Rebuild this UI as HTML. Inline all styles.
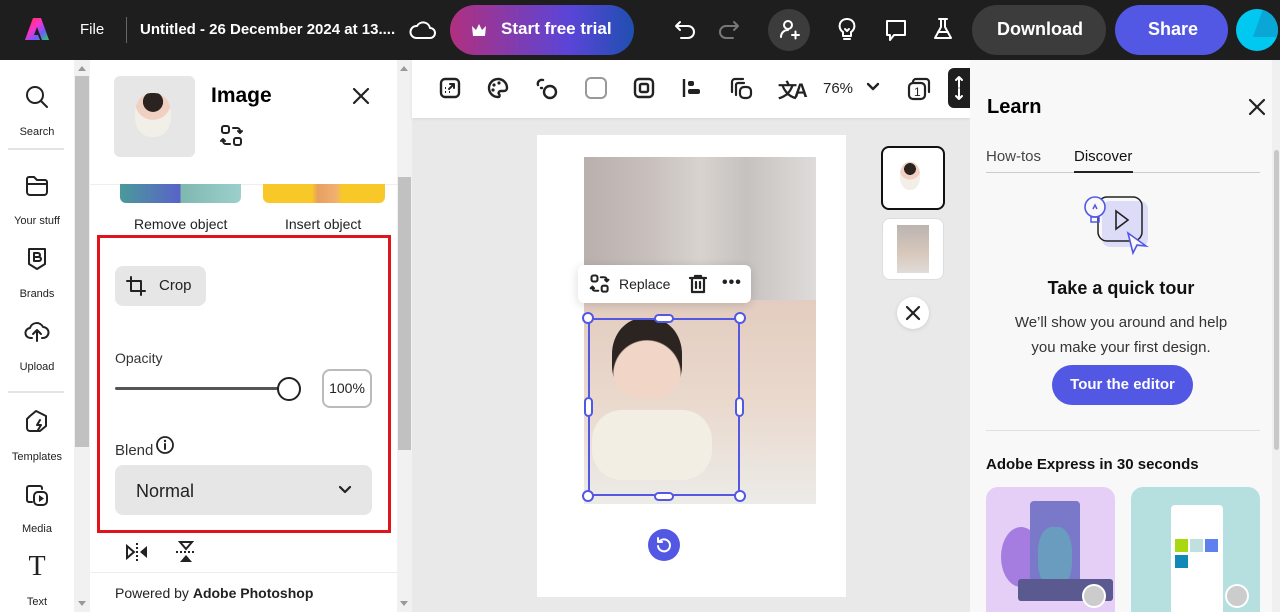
<!DOCTYPE html>
<html><head><meta charset="utf-8"><style>
*{box-sizing:border-box;margin:0;padding:0}
body{width:1280px;height:612px;overflow:hidden;font-family:"Liberation Sans",sans-serif;background:#e9e9e9;position:relative;color:#222}
.a{position:absolute}
.top{left:0;top:0;width:1280px;height:60px;background:#1e1e1e;color:#fff}
.ic{stroke:#222;fill:none;stroke-width:2;stroke-linecap:round;stroke-linejoin:round}
.w{stroke:#fff}
.rl{font-size:11px;color:#222;text-align:center;width:74px;left:0}
</style></head><body>
<div class="a top">
 <svg class="a" style="left:24px;top:16px" width="26" height="26" viewBox="0 0 26 26"><defs><linearGradient id="g" x1="0" y1="0" x2="1" y2="1"><stop offset="0" stop-color="#ff3b30"/><stop offset=".4" stop-color="#ff2fc8"/><stop offset=".7" stop-color="#6a5cff"/><stop offset="1" stop-color="#2fd15a"/></linearGradient></defs><path d="M9 2h8l8 22h-7l-5-13-3 8h4l2 5H1z" fill="url(#g)"/></svg>
 <div class="a" style="left:80px;top:21px;font-size:15px">File</div>
 <div class="a" style="left:126px;top:17px;width:1px;height:26px;background:#666"></div>
 <div class="a" style="left:140px;top:21px;font-size:15px;font-weight:bold">Untitled - 26 December 2024 at 13....</div>
 <svg class="a" style="left:409px;top:18px" width="28" height="24" viewBox="0 0 28 24"><path class="ic w" d="M7 20h14a5 5 0 0 0 0-10 7 7 0 0 0-13-2A6 6 0 0 0 7 20z"/></svg>
 <div class="a" style="left:450px;top:5px;width:184px;height:50px;border-radius:25px;background:linear-gradient(90deg,#b0307f,#5a45d8 65%,#1f4fb0)"></div>
 <svg class="a" style="left:470px;top:22px" width="18" height="16" viewBox="0 0 18 16"><path d="M2 4l4 4 3-6 3 6 4-4-1 10H3z" fill="#fff"/></svg>
 <div class="a" style="left:501px;top:19px;font-size:17px;font-weight:bold">Start free trial</div>
 <svg class="a" style="left:672px;top:16px" width="28" height="26" viewBox="0 0 28 26"><path class="ic w" d="M8 6L4 10l4 4M4 10h12a6 6 0 0 1 0 12H9"/></svg>
 <svg class="a" style="left:714px;top:16px" width="28" height="26" viewBox="0 0 28 26"><path class="ic" style="stroke:#777" d="M20 6l4 4-4 4M24 10H12a6 6 0 0 0 0 12h7"/></svg>
 <div class="a" style="left:768px;top:9px;width:42px;height:42px;border-radius:50%;background:#3c3c3c"></div>
 <svg class="a" style="left:777px;top:17px" width="24" height="26" viewBox="0 0 24 26"><circle class="ic w" cx="11" cy="8" r="4"/><path class="ic w" d="M4 20c0-4 3-7 7-7M15 18h7M18.5 14.5v7"/></svg>
 <svg class="a" style="left:836px;top:17px" width="22" height="26" viewBox="0 0 22 26"><path class="ic w" d="M11 2a7 7 0 0 0-4 13v4h8v-4a7 7 0 0 0-4-13zM8 22h6M9 12l2 2 2-2"/></svg>
 <svg class="a" style="left:883px;top:17px" width="26" height="26" viewBox="0 0 26 26"><path class="ic w" d="M4 4h18v14H11l-4 5v-5H4z"/></svg>
 <svg class="a" style="left:932px;top:16px" width="22" height="26" viewBox="0 0 22 26"><path class="ic w" d="M7 3h8M9 3v8L3 22h16L13 11V3M6 16h10"/></svg>
 <div class="a" style="left:972px;top:5px;width:134px;height:50px;border-radius:25px;background:#3c3c3c"></div>
 <div class="a" style="left:997px;top:19px;font-size:18px;font-weight:bold">Download</div>
 <div class="a" style="left:1115px;top:5px;width:113px;height:50px;border-radius:25px;background:#5258e4"></div>
 <div class="a" style="left:1148px;top:19px;font-size:18px;font-weight:bold">Share</div>
 <div class="a" style="left:1236px;top:9px;width:42px;height:42px;border-radius:50%;background:#00c8f0;overflow:hidden"><div class="a" style="left:22px;top:0;width:30px;height:28px;background:#0aa6d6;transform:skewX(-20deg)"></div></div>
</div>

<!-- left rail -->
<div class="a" style="left:0;top:60px;width:74px;height:552px;background:#fff"></div>
<svg class="a" style="left:24px;top:84px" width="26" height="26" viewBox="0 0 26 26"><circle class="ic" cx="11" cy="11" r="8"/><path class="ic" d="M17 17l6 6"/></svg>
<div class="a rl" style="top:126px">Search</div>
<div class="a" style="left:8px;top:148px;width:56px;height:2px;background:#e4e4e4"></div>
<svg class="a" style="left:24px;top:174px" width="26" height="24" viewBox="0 0 26 24"><path class="ic" d="M3 5a2 2 0 0 1 2-2h5l3 3h8a2 2 0 0 1 2 2v10a3 3 0 0 1-3 3H6a3 3 0 0 1-3-3zM3 10h20"/></svg>
<div class="a rl" style="top:215px">Your stuff</div>
<svg class="a" style="left:25px;top:246px" width="24" height="26" viewBox="0 0 24 26"><path class="ic" d="M4 3h16v15l-8 5-8-5z"/><path class="ic" d="M9 7h4a2 2 0 0 1 0 4H9zM9 11h5a2 2 0 0 1 0 4H9z"/></svg>
<div class="a rl" style="top:288px">Brands</div>
<svg class="a" style="left:24px;top:318px" width="26" height="26" viewBox="0 0 26 26"><path class="ic" d="M8 20H7a5 5 0 0 1-1-10 7 7 0 0 1 13-1 5 5 0 0 1 0 11h-1M13 23V12M9 16l4-4 4 4"/></svg>
<div class="a rl" style="top:361px">Upload</div>
<div class="a" style="left:8px;top:391px;width:56px;height:2px;background:#e4e4e4"></div>
<svg class="a" style="left:24px;top:408px" width="26" height="26" viewBox="0 0 26 26"><path class="ic" d="M6 8l6-5 10 5v10l-6 5H6a3 3 0 0 1-3-3v-9zM16 12l-3 5h4l-3 5"/></svg>
<div class="a rl" style="top:451px">Templates</div>
<svg class="a" style="left:24px;top:480px" width="26" height="28" viewBox="0 0 26 28"><path class="ic" d="M8 22H5a2 2 0 0 1-2-2V8a2 2 0 0 1 2-2h11a2 2 0 0 1 2 2v1"/><rect class="ic" x="10" y="12" width="13" height="13" rx="4"/><path d="M15 15v7l5-3.5z" fill="#222"/></svg>
<div class="a rl" style="top:523px">Media</div>
<div class="a" style="left:0;width:74px;top:552px;text-align:center;font-family:'Liberation Serif',serif;font-size:28px;line-height:30px">T</div>
<div class="a rl" style="top:596px">Text</div>
<!-- rail scrollbar -->
<div class="a" style="left:74px;top:60px;width:16px;height:552px;background:#f1f1f1"></div>
<div class="a" style="left:75px;top:76px;width:14px;height:371px;background:#c1c1c1"></div>
<div class="a" style="left:78px;top:66px;border:4px solid transparent;border-bottom:5px solid #999;border-top:0"></div>
<div class="a" style="left:78px;top:601px;border:4px solid transparent;border-top:5px solid #999;border-bottom:0"></div>

<!-- panel -->
<div class="a" style="left:90px;top:60px;width:307px;height:552px;background:#fff;overflow:hidden">
 <div class="a" style="left:24px;top:16px;width:81px;height:81px;border-radius:6px;background:#e6e6e6"></div>
 <div class="a" style="left:45px;top:33px;width:36px;height:44px;border-radius:45%;background:radial-gradient(circle at 50% 20%,#2a2320 0 25%,#f0d0c0 26% 45%,#f2efe8 46%)"></div>
 <div class="a" style="left:121px;top:24px;font-size:21px;font-weight:bold;color:#000">Image</div>
 <svg class="a" style="left:129px;top:63px" width="26" height="26" viewBox="0 0 26 26"><rect class="ic" x="3" y="3" width="7" height="7" rx="2"/><rect class="ic" x="15" y="15" width="7" height="7" rx="2"/><path class="ic" d="M14 5h4a3 3 0 0 1 3 3v2M19 8l2 2 2-2M11 21H7a3 3 0 0 1-3-3v-2M6 18l-2-2-2 2"/></svg>
 <svg class="a" style="left:261px;top:26px" width="20" height="20" viewBox="0 0 20 20"><path class="ic" d="M3 3l14 14M17 3L3 17" style="stroke-width:2.2"/></svg>
 <div class="a" style="left:0;top:124px;width:307px;height:1px;background:#eee"></div>
 <div class="a" style="left:30px;top:124px;width:121px;height:19px;background:linear-gradient(90deg,#4a9a9a,#5a62c8 50%,#7fb8b0 50%,#9ccfcc);border-radius:0 0 6px 6px"></div>
 <div class="a" style="left:173px;top:124px;width:122px;height:19px;background:linear-gradient(90deg,#f8c828 40%,#e8a060 45%,#f0b070 60%,#f8c828 65%);border-radius:0 0 6px 6px"></div>
 <div class="a" style="left:44px;top:156px;font-size:14px">Remove object</div>
 <div class="a" style="left:195px;top:156px;font-size:14px">Insert object</div>
 <div class="a" style="left:25px;top:206px;width:91px;height:40px;border-radius:8px;background:#e6e6e6"></div>
 <svg class="a" style="left:35px;top:215px" width="22" height="22" viewBox="0 0 22 22"><path class="ic" d="M6 2v14h14M2 6h14v14"/></svg>
 <div class="a" style="left:69px;top:217px;font-size:15px">Crop</div>
 <div class="a" style="left:25px;top:283px;font-size:14px;color:#333;top:290px">Opacity</div>
 <div class="a" style="left:25px;top:327px;width:175px;height:3px;background:#555;border-radius:2px"></div>
 <div class="a" style="left:187px;top:317px;width:24px;height:24px;border-radius:50%;background:#fff;border:2px solid #222"></div>
 <div class="a" style="left:232px;top:309px;width:50px;height:39px;border:2px solid #bbb;border-radius:8px;font-size:14px;text-align:center;line-height:35px">100%</div>
 <div class="a" style="left:25px;top:382px;font-size:15px;color:#333">Blend</div>
 <svg class="a" style="left:65px;top:375px" width="20" height="20" viewBox="0 0 20 20"><circle class="ic" cx="10" cy="10" r="8" style="stroke-width:1.8"/><path class="ic" d="M10 9v5" style="stroke-width:2"/><circle cx="10" cy="6" r="1.2" fill="#222"/></svg>
 <div class="a" style="left:25px;top:405px;width:257px;height:50px;border-radius:8px;background:#e6e6e6"></div>
 <div class="a" style="left:46px;top:421px;font-size:18px;color:#222">Normal</div>
 <svg class="a" style="left:247px;top:424px" width="16" height="12" viewBox="0 0 16 12"><path class="ic" d="M3 3l5 5 5-5" style="stroke-width:2.2"/></svg>
 <div class="a" style="left:7px;top:175px;width:294px;height:298px;border:3px solid #e0141a"></div>
 <svg class="a" style="left:34px;top:480px" width="26" height="24" viewBox="0 0 26 24"><path d="M3 6l7 6-7 6z" fill="none" stroke="#222" stroke-width="2"/><path d="M23 6l-7 6 7 6z" fill="#222"/><path d="M13 3v18" stroke="#222" stroke-width="2" stroke-dasharray="2 2"/></svg>
 <svg class="a" style="left:84px;top:479px" width="24" height="26" viewBox="0 0 24 26"><path d="M6 3h12l-6 7z" fill="none" stroke="#222" stroke-width="2"/><path d="M6 23h12l-6-7z" fill="#222"/><path d="M2 13h20" stroke="#222" stroke-width="2" stroke-dasharray="2 2"/></svg>
 <div class="a" style="left:0;top:512px;width:307px;height:1px;background:#eee"></div>
 <div class="a" style="left:25px;top:525px;font-size:14px">Powered by <b>Adobe Photoshop</b></div>
</div>
<div class="a" style="left:397px;top:60px;width:15px;height:552px;background:#f1f1f1"></div>
<div class="a" style="left:398px;top:177px;width:13px;height:273px;background:#c1c1c1"></div>
<div class="a" style="left:400px;top:66px;border:4px solid transparent;border-bottom:5px solid #999;border-top:0"></div>
<div class="a" style="left:400px;top:601px;border:4px solid transparent;border-top:5px solid #999;border-bottom:0"></div>

<!-- toolbar -->
<div class="a" style="left:412px;top:60px;width:558px;height:58px;background:#fff;box-shadow:0 1px 3px rgba(0,0,0,.08)"></div>
<svg class="a" style="left:438px;top:76px" width="24" height="24" viewBox="0 0 24 24"><rect class="ic" x="3" y="3" width="18" height="18" rx="4" style="stroke-width:2.4"/><path class="ic" d="M11 13l5-5M12 8h4v4" /><path d="M7 16h1M7 12h1M11 16h1" stroke="#222" stroke-width="2"/></svg>
<svg class="a" style="left:486px;top:76px" width="24" height="24" viewBox="0 0 24 24"><path class="ic" d="M12 3a9 9 0 0 0 0 18c2 0 2-2 1-3s0-3 2-3h3a3 3 0 0 0 3-3c0-5-4-9-9-9z" style="stroke-width:2.4"/><circle cx="8" cy="9" r="1.6" fill="#222"/><circle cx="13" cy="7" r="1.6" fill="#222"/><circle cx="7" cy="14" r="1.6" fill="#222"/></svg>
<svg class="a" style="left:534px;top:76px" width="26" height="26" viewBox="0 0 26 26"><circle class="ic" cx="16" cy="16" r="6" style="stroke-width:2.4"/><path class="ic" d="M9 4a4 4 0 0 0-5 5M7 12h1" style="stroke-width:2.4"/></svg>
<div class="a" style="left:585px;top:77px;width:22px;height:22px;border:2px solid #999;border-radius:6px"></div>
<svg class="a" style="left:632px;top:76px" width="24" height="24" viewBox="0 0 24 24"><rect class="ic" x="3" y="3" width="18" height="18" rx="4" style="stroke-width:2.4"/><rect class="ic" x="8" y="8" width="8" height="8" rx="1.5" style="stroke-width:2.4"/></svg>
<svg class="a" style="left:680px;top:76px" width="24" height="24" viewBox="0 0 24 24"><path d="M4 3v18" stroke="#222" stroke-width="2.4"/><rect x="8" y="5" width="6" height="5" rx="2" fill="#222"/><rect x="8" y="13" width="12" height="5" rx="2" fill="#222"/></svg>
<svg class="a" style="left:728px;top:76px" width="26" height="26" viewBox="0 0 26 26"><path class="ic" d="M4 16V6a3 3 0 0 1 3-3h8M8 19V9a2 2 0 0 1 2-2h6" style="stroke-width:2.2"/><rect class="ic" x="12" y="11" width="11" height="11" rx="4" style="stroke-width:2.2"/></svg>
<div class="a" style="left:778px;top:76px;font-size:19px;font-weight:bold;letter-spacing:-3px">文A</div>
<div class="a" style="left:823px;top:80px;font-size:15px">76%</div>
<svg class="a" style="left:865px;top:81px" width="16" height="12" viewBox="0 0 16 12"><path class="ic" d="M3 3l5 5 5-5" style="stroke-width:2.4"/></svg>
<svg class="a" style="left:906px;top:76px" width="26" height="26" viewBox="0 0 26 26"><path class="ic" d="M7 6a3 3 0 0 1 3-3h10a3 3 0 0 1 3 3v10" style="stroke-width:2.2"/><rect class="ic" x="3" y="7" width="16" height="16" rx="4" style="stroke-width:2.2"/><text x="8" y="20" font-size="12" font-family="Liberation Sans" fill="#222">1</text></svg>
<div class="a" style="left:948px;top:68px;width:22px;height:40px;background:#1e1e1e;border-radius:6px 0 0 6px"></div>
<svg class="a" style="left:954px;top:74px" width="16" height="28" viewBox="0 0 16 28"><path class="ic w" d="M5 3v10M2 6l3-3 3 3M5 15v10M2 22l3 3 3-3"/></svg>

<!-- page -->
<div class="a" style="left:537px;top:135px;width:309px;height:462px;background:#fff"></div>
<div class="a" style="left:584px;top:157px;width:232px;height:347px;background:linear-gradient(90deg,#b9b0ad,#c9c1be 30%,#d8d3cf 50%,#c6c2bf 70%,#dedcda 100%)"></div>
<div class="a" style="left:584px;top:300px;width:232px;height:204px;background:linear-gradient(180deg,#e3ccc0,#ead9cd 50%,#ecebe8)"></div>
<div class="a" style="left:612px;top:318px;width:70px;height:80px;border-radius:45% 45% 40% 40%;background:radial-gradient(circle at 50% 70%,#f1d6c8 0 50%,#2b2420 52%)"></div>
<div class="a" style="left:592px;top:410px;width:120px;height:70px;border-radius:30px;background:#f3eee4"></div>
<div class="a" style="left:578px;top:265px;width:173px;height:38px;background:#fff;border-radius:6px;box-shadow:0 2px 10px rgba(0,0,0,.15)"></div>
<svg class="a" style="left:589px;top:273px" width="22" height="22" viewBox="0 0 26 26"><rect class="ic" x="3" y="3" width="7" height="7" rx="2" style="stroke-width:2.4"/><rect class="ic" x="15" y="15" width="7" height="7" rx="2" style="stroke-width:2.4"/><path class="ic" d="M14 5h4a3 3 0 0 1 3 3v2M19 8l2 2 2-2M11 21H7a3 3 0 0 1-3-3v-2M6 18l-2-2-2 2" style="stroke-width:2.4"/></svg>
<div class="a" style="left:619px;top:276px;font-size:14px">Replace</div>
<svg class="a" style="left:687px;top:273px" width="22" height="22" viewBox="0 0 22 22"><path class="ic" d="M3 5h16M8 5V3h6v2M5 5v14h12V5M9 9v6M13 9v6" style="stroke-width:2.2"/></svg>
<div class="a" style="left:722px;top:274px;font-size:16px;font-weight:bold;letter-spacing:1px">•••</div>
<div class="a" style="left:588px;top:318px;width:152px;height:178px;border:2px solid #5258e4"></div>
<div class="a" style="left:582px;top:312px;width:12px;height:12px;border-radius:50%;background:#fff;border:2px solid #5258e4"></div>
<div class="a" style="left:734px;top:312px;width:12px;height:12px;border-radius:50%;background:#fff;border:2px solid #5258e4"></div>
<div class="a" style="left:582px;top:490px;width:12px;height:12px;border-radius:50%;background:#fff;border:2px solid #5258e4"></div>
<div class="a" style="left:734px;top:490px;width:12px;height:12px;border-radius:50%;background:#fff;border:2px solid #5258e4"></div>
<div class="a" style="left:654px;top:314px;width:20px;height:9px;border-radius:5px;background:#fff;border:2px solid #5258e4"></div>
<div class="a" style="left:654px;top:492px;width:20px;height:9px;border-radius:5px;background:#fff;border:2px solid #5258e4"></div>
<div class="a" style="left:584px;top:397px;width:9px;height:20px;border-radius:5px;background:#fff;border:2px solid #5258e4"></div>
<div class="a" style="left:735px;top:397px;width:9px;height:20px;border-radius:5px;background:#fff;border:2px solid #5258e4"></div>
<div class="a" style="left:648px;top:529px;width:32px;height:32px;border-radius:50%;background:#5258e4"></div>
<svg class="a" style="left:654px;top:535px" width="20" height="20" viewBox="0 0 20 20"><path class="ic w" d="M5 7a6 6 0 1 1-1 4M4 3v4h4"/></svg>

<!-- thumbs -->
<div class="a" style="left:881px;top:146px;width:64px;height:64px;border:2px solid #111;border-radius:8px;background:#fff"></div>
<div class="a" style="left:900px;top:162px;width:20px;height:28px;border-radius:45%;background:radial-gradient(circle at 50% 25%,#2a2320 0 25%,#f0d0c0 26% 45%,#f2efe8 46%)"></div>
<div class="a" style="left:882px;top:218px;width:62px;height:62px;border:1px solid #ddd;border-radius:8px;background:#fff"></div>
<div class="a" style="left:897px;top:225px;width:32px;height:48px;background:linear-gradient(180deg,#bbb4b0,#d8c8bc 60%,#e0dcd8)"></div>
<div class="a" style="left:897px;top:297px;width:32px;height:32px;border-radius:50%;background:#fff;box-shadow:0 1px 4px rgba(0,0,0,.12)"></div>
<svg class="a" style="left:905px;top:305px" width="16" height="16" viewBox="0 0 16 16"><path class="ic" d="M2 2l12 12M14 2L2 14" style="stroke-width:2.2"/></svg>

<!-- right panel -->
<div class="a" style="left:970px;top:60px;width:310px;height:552px;background:#f8f8f8"></div>
<div class="a" style="left:1272px;top:60px;width:8px;height:552px;background:#f0f0f0"></div>
<div class="a" style="left:1274px;top:150px;width:5px;height:300px;background:#c8c8c8;border-radius:3px"></div>
<div class="a" style="left:987px;top:96px;font-size:20px;font-weight:bold;color:#000">Learn</div>
<svg class="a" style="left:1247px;top:97px" width="20" height="20" viewBox="0 0 20 20"><path class="ic" d="M3 3l14 14M17 3L3 17" style="stroke-width:2.2"/></svg>
<div class="a" style="left:986px;top:148px;font-size:15px;color:#444">How-tos</div>
<div class="a" style="left:1074px;top:148px;font-size:15px;color:#111">Discover</div>
<div class="a" style="left:986px;top:172px;width:274px;height:1px;background:#ccc"></div>
<div class="a" style="left:1074px;top:171px;width:59px;height:2px;background:#222"></div>
<svg class="a" style="left:1080px;top:189px" width="86" height="80" viewBox="0 0 86 80"><rect x="22" y="12" width="46" height="46" rx="8" fill="#dcdcf8"/><rect x="18" y="8" width="44" height="44" rx="9" fill="none" stroke="#222" stroke-width="1.5"/><path d="M36 22l12 9-12 9z" fill="none" stroke="#222" stroke-width="1.6"/><circle cx="15" cy="18" r="10" fill="#f8f8f8" stroke="#5258e4" stroke-width="1.6"/><path d="M11 28h8v5h-8zM13 20l2-4 2 4" fill="none" stroke="#5258e4" stroke-width="1.5"/><path d="M48 44l5 20 4-8 9 1z" fill="#f8f8f8" stroke="#5258e4" stroke-width="1.6"/></svg>
<div class="a" style="left:970px;top:278px;width:302px;text-align:center;font-size:18px;font-weight:bold;color:#111">Take a quick tour</div>
<div class="a" style="left:970px;top:310px;width:302px;text-align:center;font-size:15px;line-height:25px;color:#333">We’ll show you around and help<br>you make your first design.</div>
<div class="a" style="left:1052px;top:365px;width:141px;height:40px;border-radius:20px;background:#5258e4;color:#fff;font-size:15px;font-weight:bold;text-align:center;line-height:40px">Tour the editor</div>
<div class="a" style="left:986px;top:430px;width:274px;height:1px;background:#e0e0e0"></div>
<div class="a" style="left:986px;top:456px;font-size:15px;font-weight:bold;color:#111">Adobe Express in 30 seconds</div>
<div class="a" style="left:986px;top:487px;width:129px;height:125px;border-radius:12px 12px 0 0;background:#e6cff7;overflow:hidden">
 <div class="a" style="left:15px;top:40px;width:40px;height:60px;border-radius:50%;background:#a57de0"></div>
 <div class="a" style="left:44px;top:14px;width:50px;height:100px;border-radius:4px;background:#7a78c8"></div>
 <div class="a" style="left:52px;top:40px;width:34px;height:60px;border-radius:40%;background:#6a9cc0"></div>
 <div class="a" style="left:32px;top:92px;width:95px;height:22px;background:#5a5a90;border-radius:3px"></div>
 <div class="a" style="left:96px;top:97px;width:24px;height:24px;border-radius:50%;background:#ccc;border:2px solid #fff"></div>
</div>
<div class="a" style="left:1131px;top:487px;width:129px;height:125px;border-radius:12px 12px 0 0;background:#b6dfdf;overflow:hidden">
 <div class="a" style="left:40px;top:18px;width:52px;height:110px;background:#fff;border-radius:4px"></div>
 <div class="a" style="left:44px;top:52px;width:13px;height:13px;background:#a8d810"></div>
 <div class="a" style="left:59px;top:52px;width:13px;height:13px;background:#c0e0e0"></div>
 <div class="a" style="left:74px;top:52px;width:13px;height:13px;background:#6080f0"></div>
 <div class="a" style="left:44px;top:68px;width:13px;height:13px;background:#1088b8"></div>
 <div class="a" style="left:94px;top:97px;width:24px;height:24px;border-radius:50%;background:#ccc;border:2px solid #fff"></div>
</div>
</body></html>
